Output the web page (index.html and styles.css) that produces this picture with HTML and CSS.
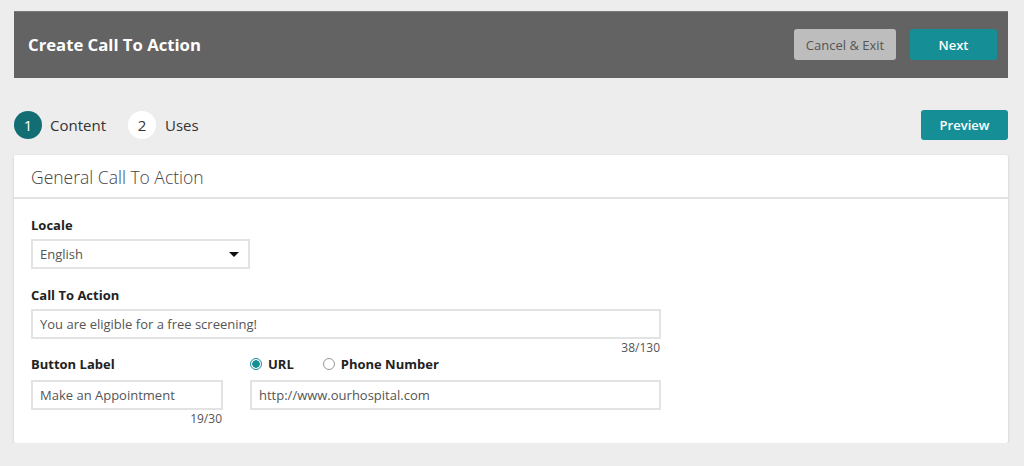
FILE: index.html
```html
<!DOCTYPE html>
<html lang="en">
<head>
  <meta charset="UTF-8" />
  <title>Create Call To Action</title>
  <link rel="stylesheet" href="styles.css">
</head>
<body>
  <div class="page">
    <div class="topbar">
      <h1>Create Call To Action</h1>
      <div class="topbar-actions">
        <button class="btn btn-grey">Cancel &amp; Exit</button>
        <button class="btn btn-teal btn-next">Next</button>
      </div>
    </div>

    <div class="steps-row">
      <div class="steps">
        <div class="step active"><span class="step-num">1</span>Content</div>
        <div class="step"><span class="step-num">2</span>Uses</div>
      </div>
      <button class="btn btn-teal btn-preview">Preview</button>
    </div>

    <div class="card">
      <div class="card-head">General Call To Action</div>
      <div class="card-body">
        <label class="field-label">Locale</label>
        <div class="select">
          <span>English</span>
          <span class="caret"></span>
        </div>

        <label class="field-label">Call To Action</label>
        <div class="field wide">
          <div class="input">You are eligible for a free screening!</div>
          <div class="counter">38/130</div>
        </div>

        <div class="row">
          <div class="field short">
            <label class="field-label">Button Label</label>
            <div class="input">Make an Appointment</div>
            <div class="counter">19/30</div>
          </div>
          <div class="field link">
            <div class="radios">
              <span class="radio checked"></span><span class="radio-text">URL</span>
              <span class="radio"></span><span class="radio-text">Phone Number</span>
            </div>
            <div class="input">http://www.ourhospital.com</div>
          </div>
        </div>
      </div>
    </div>
  </div>
</body>
</html>
```

FILE: styles.css
```css
body {
  margin: 0;
  background: #ededed;
  font-family: 'Open Sans', 'Liberation Sans', sans-serif;
  color: #333;
}

.page {
  padding: 11px 16px 0 14px;
}

.topbar {
  height: 66px;
  background: #636363;
  border-top: 1px solid #7a7a7a;
  display: flex;
  align-items: center;
  justify-content: space-between;
  padding: 0 11px 0 14px;
}

.topbar h1 {
  margin: -2px 0 0;
  font-size: 16.7px;
  font-weight: 700;
  color: #fff;
}

.topbar-actions {
  display: flex;
  gap: 14px;
  margin-top: -1px;
}

.btn {
  font-family: inherit;
  font-size: 13px;
  font-weight: 600;
  height: 31px;
  border: none;
  border-radius: 3px;
  padding: 0;
  cursor: pointer;
}

.btn-grey {
  width: 102px;
  background: #bdbdbd;
  color: #555;
  font-weight: 400;
}

.btn-teal {
  background: #168e96;
  color: #fff;
}

.btn-next {
  width: 87px;
}

.btn-preview {
  width: 87px;
  height: 30px;
}

.steps-row {
  display: flex;
  justify-content: space-between;
  align-items: center;
  margin-top: 32px;
}

.steps {
  display: flex;
  gap: 22px;
}

.step {
  display: flex;
  align-items: center;
  font-size: 15px;
  color: #333;
}

.step-num {
  width: 28px;
  height: 28px;
  border-radius: 50%;
  background: #fff;
  color: #333;
  display: flex;
  align-items: center;
  justify-content: center;
  font-size: 15px;
  margin-right: 9px;
}

.step.active .step-num {
  background: #136e74;
  color: #fff;
  margin-right: 8px;
}

.card {
  margin-top: 15px;
  background: #fff;
  border-radius: 2px;
  box-shadow: 0 1px 3px rgba(0, 0, 0, 0.15);
}

.card-head {
  height: 42px;
  line-height: 44px;
  padding-left: 17px;
  font-size: 17.5px;
  font-weight: 300;
  color: #444;
  border-bottom: 2px solid #e2e2e2;
}

.card-body {
  padding: 17px 17px 15px;
}

.field-label {
  display: block;
  font-size: 13px;
  font-weight: 700;
  color: #222;
  margin-bottom: 5px;
}

.select,
.input {
  box-sizing: border-box;
  height: 30px;
  border: 2px solid #e3e3e3;
  display: flex;
  align-items: center;
  padding: 0 7px;
  font-size: 13px;
  color: #555;
}

.select {
  width: 219px;
  justify-content: space-between;
  margin-bottom: 17px;
}

.caret {
  width: 0;
  height: 0;
  border-left: 5px solid transparent;
  border-right: 5px solid transparent;
  border-top: 5px solid #111;
  margin-right: 2px;
}

.field.wide {
  width: 630px;
}

.counter {
  text-align: right;
  font-size: 12px;
  color: #555;
  line-height: 18px;
  padding-right: 1px;
}

.row {
  display: flex;
  gap: 27px;
  margin-top: -2px;
}

.row .field-label {
  margin-bottom: 7px;
}

.field.short {
  width: 192px;
}

.field.link {
  width: 411px;
}

.radios {
  display: flex;
  align-items: center;
  font-size: 13px;
  font-weight: 700;
  color: #222;
  height: 18px;
  margin-bottom: 7px;
}

.radio {
  box-sizing: border-box;
  width: 12px;
  height: 12px;
  border-radius: 50%;
  border: 1px solid #999;
  margin-right: 6px;
  background: #fff;
}

.radio.checked {
  border-color: #168e96;
  background: radial-gradient(circle, #168e96 0 3.5px, #fff 4px);
}

.radio-text {
  margin-right: 29px;
}
```
